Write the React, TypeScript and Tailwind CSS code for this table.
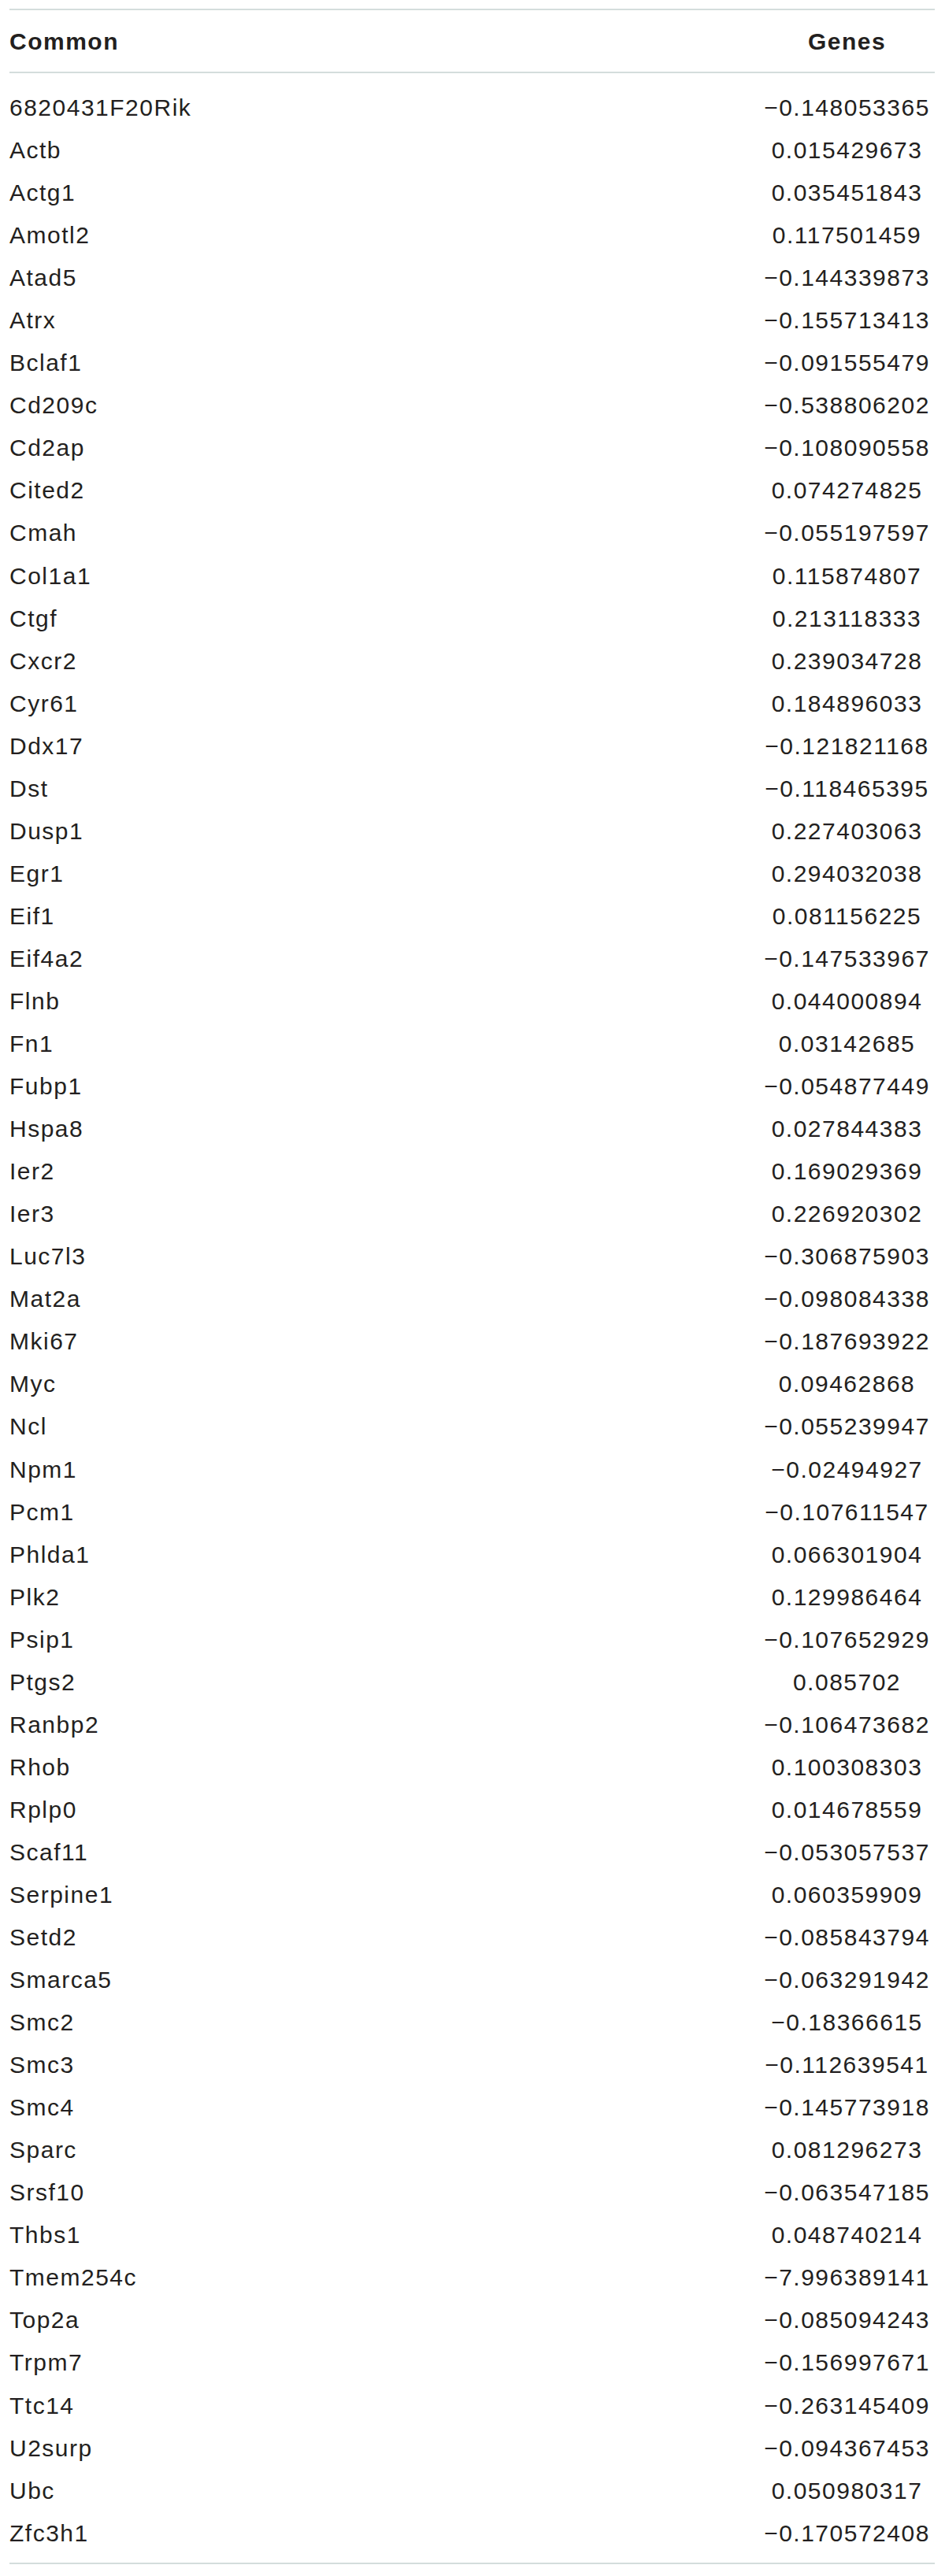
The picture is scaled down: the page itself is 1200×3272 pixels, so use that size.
const rows: [string, string][] = [
  ["6820431F20Rik", "−0.148053365"],
  ["Actb", "0.015429673"],
  ["Actg1", "0.035451843"],
  ["Amotl2", "0.117501459"],
  ["Atad5", "−0.144339873"],
  ["Atrx", "−0.155713413"],
  ["Bclaf1", "−0.091555479"],
  ["Cd209c", "−0.538806202"],
  ["Cd2ap", "−0.108090558"],
  ["Cited2", "0.074274825"],
  ["Cmah", "−0.055197597"],
  ["Col1a1", "0.115874807"],
  ["Ctgf", "0.213118333"],
  ["Cxcr2", "0.239034728"],
  ["Cyr61", "0.184896033"],
  ["Ddx17", "−0.121821168"],
  ["Dst", "−0.118465395"],
  ["Dusp1", "0.227403063"],
  ["Egr1", "0.294032038"],
  ["Eif1", "0.081156225"],
  ["Eif4a2", "−0.147533967"],
  ["Flnb", "0.044000894"],
  ["Fn1", "0.03142685"],
  ["Fubp1", "−0.054877449"],
  ["Hspa8", "0.027844383"],
  ["Ier2", "0.169029369"],
  ["Ier3", "0.226920302"],
  ["Luc7l3", "−0.306875903"],
  ["Mat2a", "−0.098084338"],
  ["Mki67", "−0.187693922"],
  ["Myc", "0.09462868"],
  ["Ncl", "−0.055239947"],
  ["Npm1", "−0.02494927"],
  ["Pcm1", "−0.107611547"],
  ["Phlda1", "0.066301904"],
  ["Plk2", "0.129986464"],
  ["Psip1", "−0.107652929"],
  ["Ptgs2", "0.085702"],
  ["Ranbp2", "−0.106473682"],
  ["Rhob", "0.100308303"],
  ["Rplp0", "0.014678559"],
  ["Scaf11", "−0.053057537"],
  ["Serpine1", "0.060359909"],
  ["Setd2", "−0.085843794"],
  ["Smarca5", "−0.063291942"],
  ["Smc2", "−0.18366615"],
  ["Smc3", "−0.112639541"],
  ["Smc4", "−0.145773918"],
  ["Sparc", "0.081296273"],
  ["Srsf10", "−0.063547185"],
  ["Thbs1", "0.048740214"],
  ["Tmem254c", "−7.996389141"],
  ["Top2a", "−0.085094243"],
  ["Trpm7", "−0.156997671"],
  ["Ttc14", "−0.263145409"],
  ["U2surp", "−0.094367453"],
  ["Ubc", "0.050980317"],
  ["Zfc3h1", "−0.170572408"],
];

export default function App() {
  return (
    <div className="min-h-[3272px] bg-white pt-[11px] font-['Liberation_Sans',Arial,sans-serif] text-[30px] tracking-[1.5px] text-[#231f20]">
      <div className="ml-[12px] mr-[13px] border-y-2 border-[#d4dddc]">
        <div className="flex h-[80px] items-center justify-between border-b-2 border-[#d4dddc] font-bold">
          <span>Common</span>
          <span className="w-[223px] text-center">Genes</span>
        </div>
        <div className="pt-[17px] pb-[10px]">
          {rows.map(([gene, value]) => (
            <div key={gene} className="flex h-[54.05px] items-center justify-between leading-[54.05px]">
              <span>{gene}</span>
              <span className="w-[223px] text-center">{value}</span>
            </div>
          ))}
        </div>
      </div>
    </div>
  );
}
